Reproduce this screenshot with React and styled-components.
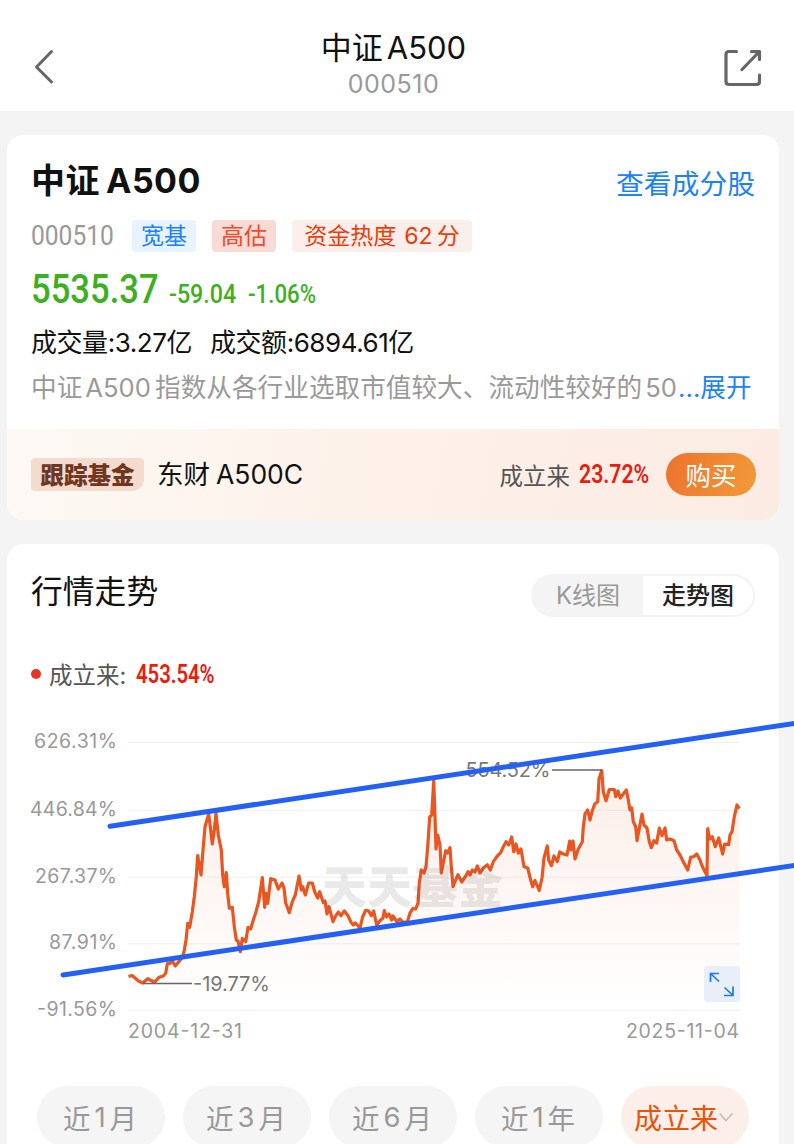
import styled, { createGlobalStyle } from 'styled-components';

// x,y pairs of the price line
const series = [
    [128.5, 976.5], [132, 975.5], [135, 978], [138.5, 981], [142.7, 983], [147.7, 978.7], [151.7, 980.7], [154.3, 982.3],
    [159, 977.3], [163.3, 976], [165.7, 973.3], [167.3, 963.7], [170, 963.3], [172, 960.7], [175.3, 966], [178.3, 962.3],
    [182.7, 957.3], [184.3, 950], [186, 940], [187.7, 923.3], [189.7, 927.3], [192.3, 911.7], [194.3, 896.7], [196.3, 876.7],
    [197.7, 855.7], [201, 875], [203, 850], [205, 826.7], [208.7, 814], [210.3, 826.7], [212.3, 844], [214.3, 830],
    [216, 813.3], [218.3, 835], [221.3, 850], [222.7, 875], [224.3, 886.7], [226.3, 872.7], [227.7, 893.3], [229.3, 908.3],
    [232.3, 907.3], [234.3, 926.7], [236.3, 940], [238, 941], [240.3, 951.7], [242.3, 938.3], [245.7, 941.7], [248, 927.3],
    [250.7, 929], [253.3, 920], [256, 911.7], [258.7, 901.7], [262.3, 877.7], [264.7, 907.3], [266, 893.3], [267.7, 903.3],
    [270.7, 878.7], [275, 880], [278.3, 889], [282, 883], [284, 888], [285.7, 903], [289.3, 912.7], [292.3, 901.7],
    [295.3, 895], [299, 876], [301.3, 890], [302.7, 886.7], [305.3, 895], [308.7, 883], [312.3, 883], [314.7, 891.7],
    [317.7, 898], [319.7, 891.7], [323.3, 902.7], [325, 901], [327, 914], [329, 906.7], [333, 921.7], [335.3, 916.7],
    [338.3, 912], [341, 915.7], [344.3, 911], [348, 915.7], [350.7, 921.7], [353.3, 925], [355.3, 923], [360, 928],
    [362.7, 916.7], [365.7, 910.3], [368.7, 911], [371.3, 915.7], [373.7, 911], [376.7, 925], [380, 920.7], [383, 918],
    [384.3, 910.7], [386.7, 917], [389, 914], [391.7, 920], [393, 916], [395, 919], [397, 921.7], [400, 919],
    [402.7, 922], [407.3, 922], [410, 913], [412.7, 908.7], [415.7, 909], [418, 903], [419.3, 883], [421.3, 870],
    [424, 873], [426, 866.7], [427.7, 846.7], [429.7, 817], [431.7, 815], [433.7, 781], [435, 816.7], [436, 849],
    [437.7, 835], [440, 845], [441.3, 873], [443.3, 863], [445.7, 850.7], [447.7, 853], [450, 847.7], [451.3, 866.7],
    [453, 886.7], [455.7, 880], [458, 874.7], [461.7, 882], [465.3, 876.7], [468, 871.7], [470, 875], [472.3, 870],
    [475, 872], [477.3, 866], [480, 873], [483.3, 868], [487.3, 864.7], [490.3, 870], [493.3, 861.7], [497.3, 856],
    [500.7, 852.7], [503.3, 846.7], [506, 841.7], [508.7, 845], [511.7, 837], [513.7, 851.7], [516, 844], [518.3, 853],
    [521, 849], [524, 866.7], [527.7, 868], [530.7, 880], [532.7, 886.7], [535, 880.5], [539.2, 890.5], [542, 878],
    [544, 858], [547.3, 846], [548.7, 860], [551.3, 865.7], [554, 856], [557.3, 861.7], [559.7, 852], [563.3, 854],
    [567, 855], [569.7, 841], [571, 850], [573, 841], [575, 859], [578.3, 849], [582.3, 841.7], [583.3, 826.7],
    [585, 814], [587.7, 810], [590, 820], [592, 811.7], [594.7, 804], [597.7, 801.7], [599, 779], [601.7, 770.7],
    [603.3, 791.7], [606, 800.7], [609.3, 789.5], [614.3, 789.5], [615.7, 796.7], [618, 791], [620.3, 798], [623.3, 794],
    [626.3, 790], [628.3, 800], [630, 810], [631.7, 808], [633.3, 821.7], [635.7, 826.7], [637, 840.7], [639, 830],
    [642, 814], [644, 825], [647, 828], [649.3, 841.7], [651.3, 847.7], [654, 840.7], [656.7, 843], [659.3, 828],
    [662, 835.7], [665, 828], [666.7, 840], [670, 839], [674, 840.7], [676.7, 850], [680, 855], [683.3, 861.7],
    [687.7, 870], [690.7, 857], [693.3, 857], [696.7, 854], [700, 860], [702, 865.7], [707, 875.7], [707.7, 828.7],
    [709.7, 839], [712.3, 836.7], [715.3, 846.7], [718.7, 838], [722.7, 854], [724.7, 844], [728.7, 844.7], [730, 835],
    [732, 831.7], [734.3, 816.7], [737, 805], [739.3, 808.7],
];

const line = series.map((p) => p.join(',')).join(' ');

const yTicks = [
    { label: '626.31%', y: 742.5, width: 83 },
    { label: '446.84%', y: 810.3, width: 87 },
    { label: '267.37%', y: 877.2, width: 82 },
    { label: '87.91%', y: 943.8, width: 68 },
    { label: '-91.56%', y: 1010.3, width: 80 },
];

const ranges = [
    ['近', '1', '月'],
    ['近', '3', '月'],
    ['近', '6', '月'],
    ['近', '1', '年'],
];

function TrendChart() {
    return (
        <Chart viewBox="7 720 772 330">
            <defs>
                <linearGradient id="area" x1="0" y1="770" x2="0" y2="1010" gradientUnits="userSpaceOnUse">
                    <stop offset="0" stopColor="#e0602c" stopOpacity="0.11" />
                    <stop offset="1" stopColor="#e0602c" stopOpacity="0" />
                </linearGradient>
            </defs>
            {yTicks.map((tick) => (
                <g key={tick.label}>
                    <line x1="128" x2="740" y1={tick.y} y2={tick.y} stroke="#f1f1f1" />
                    <AxisText x="117" y={tick.y + 5.5} textAnchor="end" textLength={tick.width}>{tick.label}</AxisText>
                </g>
            ))}
            <polygon points={`128.5,1010 ${line} 739.3,1010`} fill="url(#area)" />
            <polyline points={line} fill="none" stroke="#ea5520" strokeWidth="3.2" strokeLinejoin="round" />
            <Watermark x="322" y="904" textLength="181">天天基金</Watermark>
            <line x1="143" x2="192" y1="983.5" y2="983.5" stroke="#666" strokeWidth="1.5" />
            <MarkText x="193" y="990.5" textLength="77">-19.77%</MarkText>
            <line x1="552" x2="602" y1="770" y2="770" stroke="#666" strokeWidth="1.5" />
            <MarkText x="465.5" y="777" textLength="85">554.52%</MarkText>
            <AxisText x="128" y="1038" textLength="114">2004-12-31</AxisText>
            <AxisText x="626" y="1038" textLength="113">2025-11-04</AxisText>
            <rect x="704" y="966" width="36" height="36" rx="3" fill="#e8effb" />
            <g fill="none" stroke="#1b78f2" strokeWidth="1.7">
                <path d="M710.5 982V973.5H719M711 974L719 981.5" />
                <path d="M733 986.5V995.5H724M732.5 995L724.5 987.5" />
            </g>
            <g stroke="#2360f3" strokeWidth="5" strokeLinecap="round">
                <line x1="110" y1="826.3" x2="800" y2="722.6" />
                <line x1="63" y1="975" x2="800" y2="864.6" />
            </g>
        </Chart>
    );
}

function App() {
    return (
        <Page>
            <GlobalStyle />
            <Header>
                <svg width="22" height="36" viewBox="0 0 22 36" fill="none" stroke="#666" strokeWidth="3" strokeLinecap="round" strokeLinejoin="round">
                    <path d="M18.5 2.500L3.500 18L18.500 33" />
                </svg>
                <Heading>
                    <Title>中证<Latin $gap={4}>A500</Latin></Title>
                    <SubTitle>000510</SubTitle>
                </Heading>
                <svg width="38" height="38" viewBox="0 0 38 38" fill="none" stroke="#666" strokeWidth="3.2" strokeLinecap="round" strokeLinejoin="round">
                    <path d="M12.500 2.500H5Q2 2.500 2 5.500V32.500Q2 35.500 5 35.500H32.500Q35.500 35.500 35.500 32.500V26" />
                    <path d="M18 20.500L35 3M27.500 2.500H35.500V10.500" />
                </svg>
            </Header>

            <Card $height={385}>
                <Summary>
                    <TitleRow>
                        <Name>中证<Latin $gap={6}>A500</Latin></Name>
                        <Link>查看成分股</Link>
                    </TitleRow>
                    <TagRow>
                        <Din $size={27} $width={101} $scale={0.91} $color="#999">000510</Din>
                        <Tag $color="#1b82f8" $bg="#e9f3ff" $width={64}>宽基</Tag>
                        <Tag $color="#ee4a2d" $bg="#f9dbd5" $width={64}>高估</Tag>
                        <Tag $color="#ea3d0c" $bg="#fceeea" $width={180}>资金热度<Latin $gap={8}>62</Latin><Latin $gap={4}>分</Latin></Tag>
                    </TagRow>
                    <PriceRow>
                        <Din $size={40} $width={138} $scale={0.865} $weight={500}>5535.37</Din>
                        <Din $size={25} $width={79} $scale={0.93} $weight={500}>-59.04</Din>
                        <Din $size={25} $width={80} $scale={0.89} $weight={500}>-1.06%</Din>
                    </PriceRow>
                    <Volume>
                        <span>成交量:3.27亿</span>
                        <span>成交额:6894.61亿</span>
                    </Volume>
                    <Intro>
                        <span>中证<Latin $gap={3}>A500</Latin><Latin $gap={4}>指数从各行业选取市值较大、流动性较好的</Latin><Latin $gap={3}>50</Latin></span>
                        <More>...展开</More>
                    </Intro>
                </Summary>
                <Tracking>
                    <TrackLabel>跟踪基金</TrackLabel>
                    <FundName>东财<Latin $gap={6}>A500C</Latin></FundName>
                    <Since>成立来</Since>
                    <Din $size={25} $width={87} $scale={0.85} $weight={600} $color="#e5200f">23.72%</Din>
                    <Buy>购买</Buy>
                </Tracking>
            </Card>

            <Card $height={660}>
                <TrendHead>
                    <TrendTitle>行情走势</TrendTitle>
                    <Switch>
                        <Option>K线图</Option>
                        <Option $active>走势图</Option>
                    </Switch>
                </TrendHead>
                <Legend>
                    <Dot />
                    成立来:
                    <Din $size={25} $width={80} $scale={0.81} $weight={600} $color="#f0190f">453.54%</Din>
                </Legend>
                <TrendChart />
                <Ranges>
                    {ranges.map(([prefix, count, unit]) => (
                        <Range key={count + unit}>{prefix}<Latin $gap={4}>{count}</Latin><Latin $gap={4}>{unit}</Latin></Range>
                    ))}
                    <Range $active>
                        成立来
                        <svg width="16" height="12" viewBox="0 0 16 12" fill="none" stroke="#c6bfbb" strokeWidth="1.800">
                            <path d="M1.500 2.500L8 9.500L14.500 2.500" />
                        </svg>
                    </Range>
                </Ranges>
            </Card>
        </Page>
    );
}

const GlobalStyle = createGlobalStyle`
    * {
        box-sizing: border-box;
    }

    body {
        margin: 0;
        background: #f4f4f4;
        font-family: Inter, "Noto Sans CJK SC", sans-serif;
        overflow: hidden;
    }
`;

const Page = styled.div`
    width: 794px;
    height: 1144px;
    overflow: hidden;
    background: #f4f4f4;
    white-space: nowrap;
`;

const Header = styled.header`
    height: 111px;
    padding: 25px 32px 0 33px;
    display: flex;
    justify-content: space-between;
    background: white;

    > svg {
        margin-top: 24px;
    }
`;

const Heading = styled.div`
    display: flex;
    flex-direction: column;
    align-items: center;
    margin-left: 8px;
`;

const Title = styled.div`
    font-size: 31px;
    line-height: 46px;
    color: #111;
`;

const SubTitle = styled.div`
    font-size: 25px;
    line-height: 26px;
    letter-spacing: 0.5px;
    color: #999;
`;

const Latin = styled.span`
    margin-left: ${(props) => props.$gap}px;
`;

const Card = styled.section`
    width: 772px;
    height: ${(props) => props.$height}px;
    margin: 24px 0 0 7px;
    border-radius: 16px;
    background: white;
`;

const Summary = styled.div`
    height: 294px;
    padding: 22px 24px 0;
`;

const TitleRow = styled.div`
    display: flex;
    justify-content: space-between;
    height: 48px;
    line-height: 48px;
`;

const Name = styled.div`
    font-size: 34px;
    font-weight: 700;
    letter-spacing: 0.5px;
    color: #111;
`;

const Link = styled.div`
    font-size: 27.8px;
    line-height: 54px;
    color: #1b82f8;
`;

const TagRow = styled.div`
    display: flex;
    align-items: center;
    height: 32px;
    margin-top: 15px;
`;

// narrow digits used for codes and quotes
const Din = styled.span`
    display: inline-block;
    flex: none;
    width: ${(props) => props.$width}px;
    font-family: Roboto, sans-serif;
    font-size: ${(props) => props.$size}px;
    font-weight: ${(props) => props.$weight || 400};
    color: ${(props) => props.$color || '#3db021'};
    transform: scaleX(${(props) => props.$scale});
    transform-origin: left center;
`;

const Tag = styled.span`
    width: ${(props) => props.$width}px;
    height: 32px;
    margin-right: 16px;
    border-radius: 4px;
    font-size: 23px;
    line-height: 33px;
    text-align: center;
    color: ${(props) => props.$color};
    background: ${(props) => props.$bg};
`;

const PriceRow = styled.div`
    display: flex;
    align-items: baseline;
    height: 56px;
    line-height: 56px;
    margin-top: 10px;
`;

const Volume = styled.div`
    display: flex;
    gap: 18px;
    height: 44px;
    margin-top: 3px;
    font-size: 26px;
    line-height: 44px;
    letter-spacing: -0.45px;
    color: #111;
`;

const Intro = styled.div`
    display: flex;
    height: 46px;
    font-size: 25.6px;
    line-height: 46px;
    letter-spacing: 0.05px;
    color: #999;
`;

const More = styled.span`
    margin-left: 1px;
    color: #1b82f8;
`;

const Tracking = styled.div`
    display: flex;
    align-items: center;
    height: 91px;
    padding: 0 23px 0 24px;
    border-radius: 0 0 16px 16px;
    background: linear-gradient(100deg, #fdf9f4, #fdf1e9 50%, #fbebe3);
`;

const TrackLabel = styled.div`
    width: 113px;
    height: 33px;
    border-radius: 4px 4px 12px 4px;
    font-family: "Noto Sans CJK SC", sans-serif;
    font-size: 23.5px;
    font-weight: 900;
    line-height: 32px;
    text-align: center;
    color: #70361f;
    background: #f3dccd;
`;

const FundName = styled.div`
    margin: -4px 0 0 13px;
    font-size: 26.5px;
    color: #111;
`;

const Since = styled.div`
    margin: 0 9px 0 auto;
    font-size: 23.5px;
    color: #555;
`;

const Buy = styled.button`
    width: 90px;
    height: 43px;
    padding: 0 0 3px;
    border: none;
    border-radius: 22px;
    font-family: inherit;
    font-size: 25.5px;
    color: white;
    background: linear-gradient(110deg, #ed722e, #f19b38);
`;

const TrendHead = styled.div`
    display: flex;
    justify-content: space-between;
    height: 100px;
    padding: 30px 24px 0;
`;

const TrendTitle = styled.div`
    font-size: 31.8px;
    line-height: 36px;
    color: #111;
`;

const Switch = styled.div`
    display: flex;
    width: 224px;
    height: 43px;
    padding: 2px;
    border-radius: 22px;
    background: #f4f4f4;
`;

const Option = styled.div`
    width: 110px;
    border-radius: 0 20px 20px 0;
    font-size: 24px;
    font-weight: ${(props) => (props.$active ? 500 : 400)};
    line-height: 40px;
    text-align: center;
    color: ${(props) => (props.$active ? '#222' : '#999')};
    background: ${(props) => (props.$active ? 'white' : 'transparent')};
`;

const Legend = styled.div`
    display: flex;
    align-items: center;
    gap: 8px;
    height: 60px;
    padding-left: 24px;
    font-size: 23.5px;
    color: #555;

    ${Din} {
        margin-left: 2px;
    }
`;

const Dot = styled.i`
    width: 10px;
    height: 10px;
    border-radius: 50%;
    background: #eb3323;
`;

const Chart = styled.svg`
    display: block;
    width: 772px;
    height: 330px;
    margin-top: 16px;
    overflow: visible;
`;

const AxisText = styled.text`
    font-size: 19.5px;
    fill: #999;
`;

const MarkText = styled.text`
    font-size: 20px;
    fill: #777;
`;

const Watermark = styled.text`
    font-family: "Noto Sans CJK SC", sans-serif;
    font-size: 45px;
    font-weight: 900;
    fill: #555;
    fill-opacity: 0.15;
`;

const Ranges = styled.div`
    display: flex;
    gap: 18px;
    padding: 36px 0 0 30px;
`;

const Range = styled.div`
    display: flex;
    align-items: center;
    justify-content: center;
    width: 128px;
    height: 62px;
    padding-right: 2px;
    border-radius: 31px;
    font-size: ${(props) => (props.$active ? 28 : 27.5)}px;
    color: ${(props) => (props.$active ? '#ed5208' : '#999')};
    background: ${(props) => (props.$active ? '#fceee8' : '#f5f5f5')};
`;

export default App
